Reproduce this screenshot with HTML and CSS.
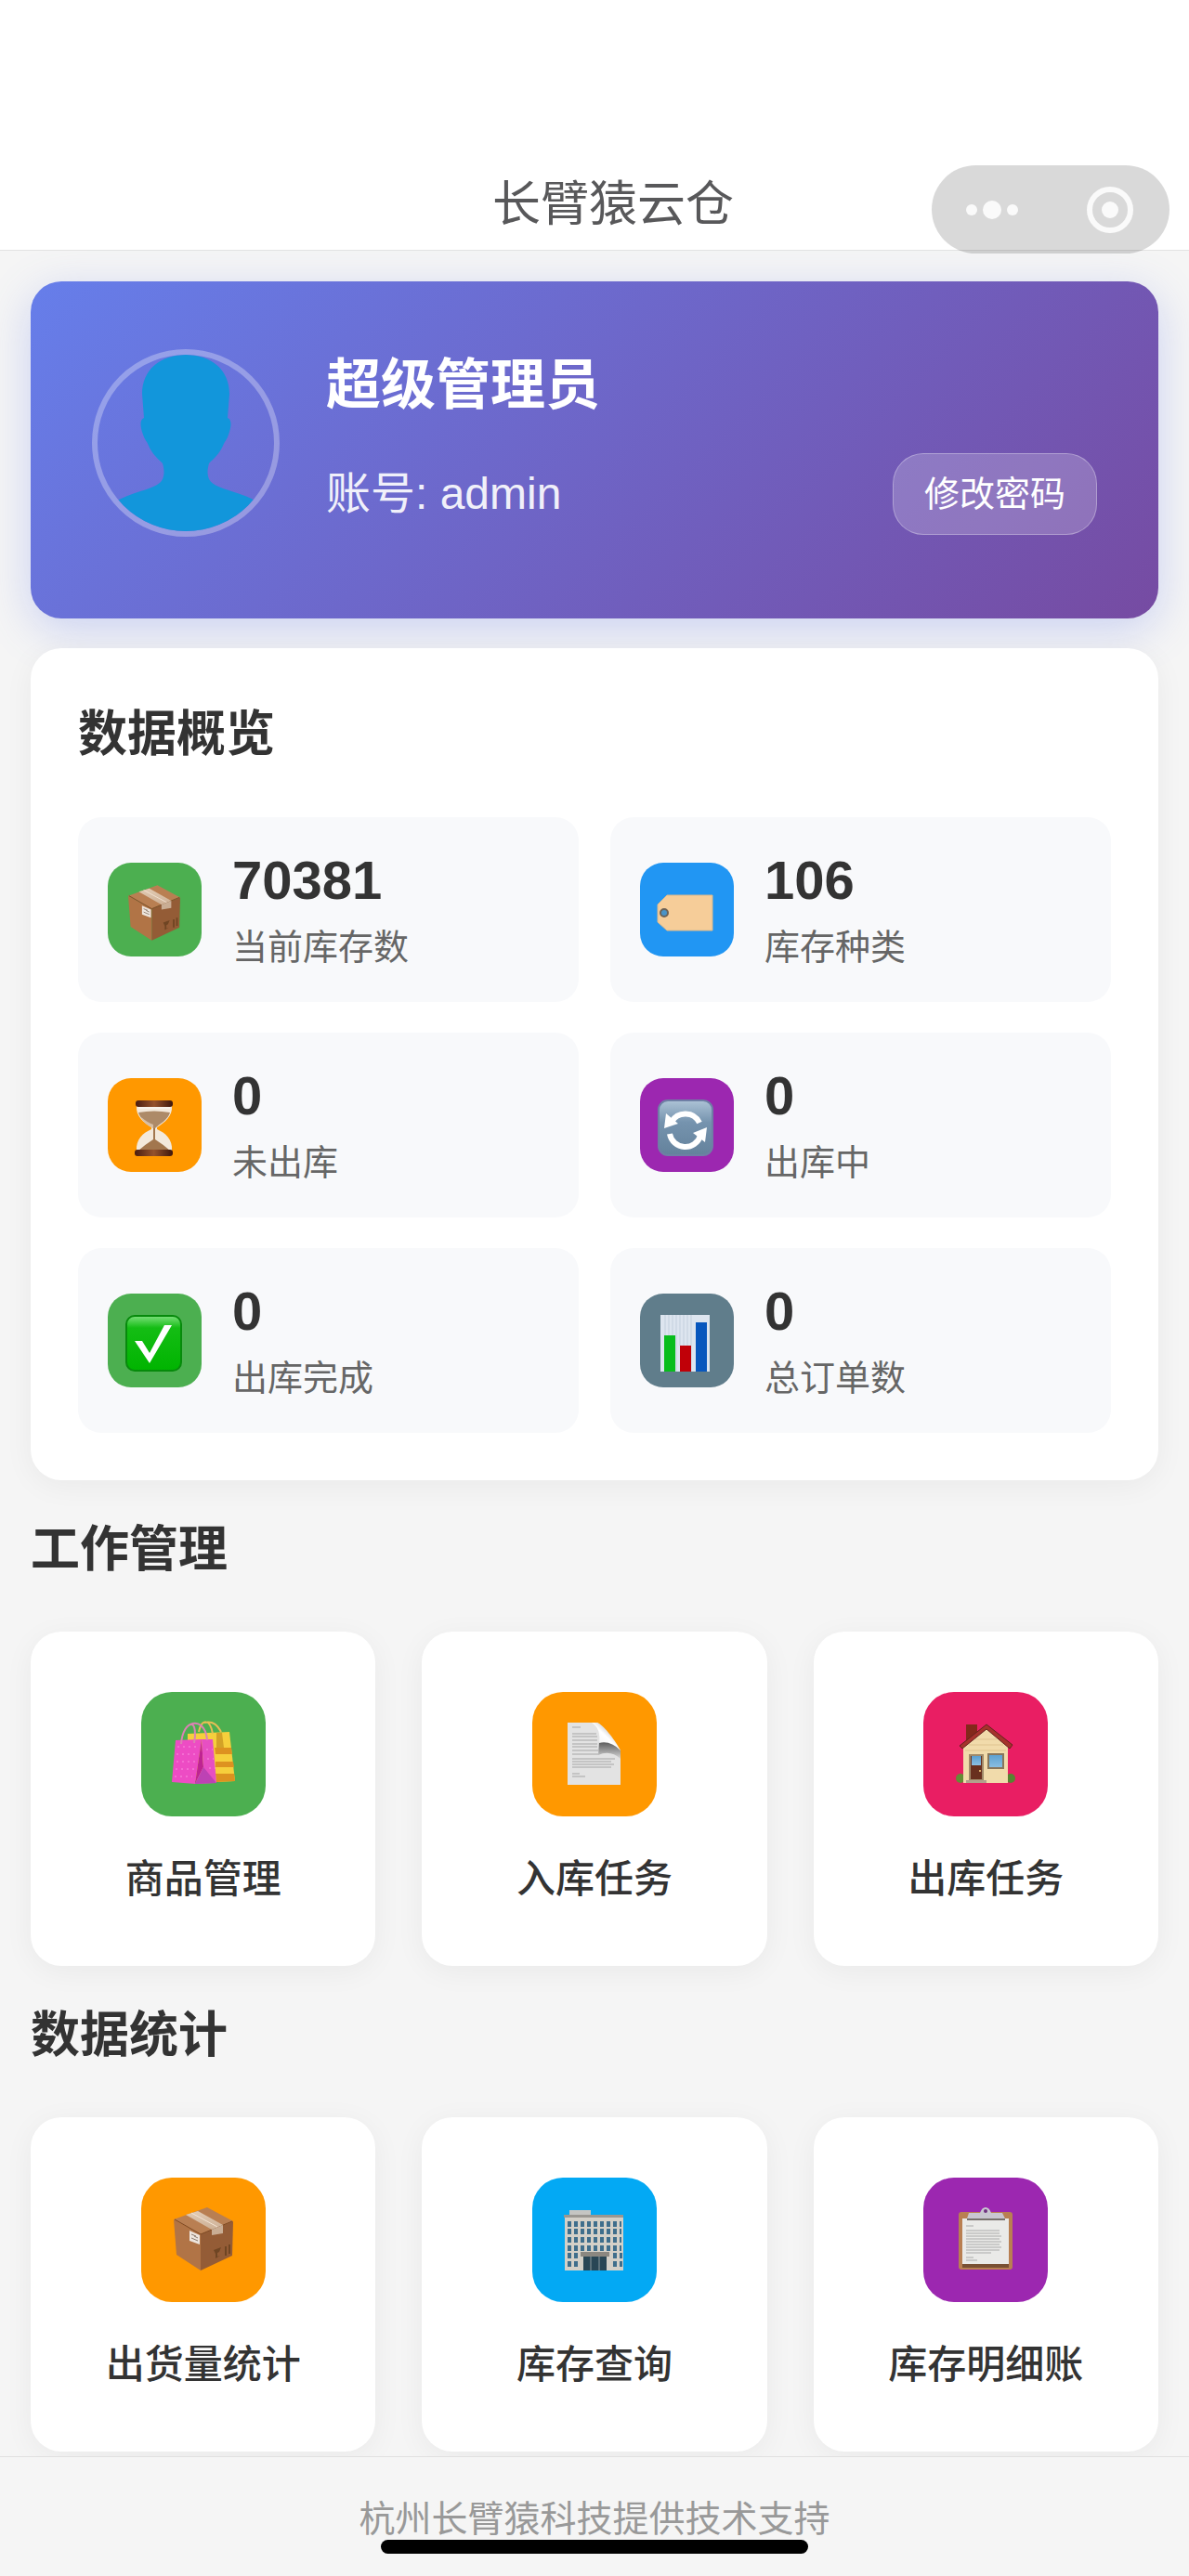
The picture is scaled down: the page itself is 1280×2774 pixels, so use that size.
FILE: index.html
```html
<!DOCTYPE html>
<html lang="zh-CN">
<head>
<meta charset="utf-8">
<meta name="viewport" content="width=device-width, initial-scale=1">
<title>长臂猿云仓</title>
<link rel="stylesheet" href="styles.css">
</head>
<body>
<svg class="defs" aria-hidden="true">
  <defs>
    <linearGradient id="tape" x1="0" y1="0" x2="0" y2="1"><stop offset="0" stop-color="#e2cbb4"/><stop offset="1" stop-color="#cdb095"/></linearGradient>
    <linearGradient id="gloss" x1="0" y1="0" x2="0" y2="1"><stop offset="0" stop-color="#7be07b"/><stop offset=".22" stop-color="#14bd14"/><stop offset="1" stop-color="#00b400"/></linearGradient>
    <linearGradient id="steel" x1="0" y1="0" x2="0" y2="1"><stop offset="0" stop-color="#adc3d6"/><stop offset=".4" stop-color="#7593ae"/><stop offset="1" stop-color="#64829c"/></linearGradient>
    <linearGradient id="wood" x1="0" y1="0" x2="1" y2="0"><stop offset="0" stop-color="#4a1d10"/><stop offset=".5" stop-color="#95522c"/><stop offset="1" stop-color="#3d160c"/></linearGradient>
    <linearGradient id="curl" x1="0" y1="1" x2="1" y2="0"><stop offset="0" stop-color="#e8e8e8"/><stop offset=".5" stop-color="#fff"/><stop offset="1" stop-color="#777"/></linearGradient>
    <linearGradient id="shade" x1="0" y1="0" x2="0" y2="1"><stop offset="0" stop-color="#555"/><stop offset="1" stop-color="#d8d8d8"/></linearGradient>
    <linearGradient id="pane" x1="0" y1="0" x2="0" y2="1"><stop offset="0" stop-color="#5b9fd0"/><stop offset="1" stop-color="#8cc0e2"/></linearGradient>
  </defs>
  <symbol id="parcel" viewBox="0 0 64 68">
    <path fill="#b97f52" d="M0 13 36 0l28 15-35 14z"/>
    <path fill="#b17446" d="m0 13 29 16v39L3 51z"/>
    <path fill="#945c36" d="m29 29 35-14-1 37-34 16z"/>
    <path fill="none" stroke="#7a4826" d="m1 13 28 16 34-14"/>
    <path fill="url(#tape)" d="m13 8 13-4 27 15-12 5z"/>
    <path fill="#c9ad94" d="m41 24 12-5v9l-12 2z"/>
    <path fill="none" stroke="#f3e4d4" d="m19 6 28 15"/>
    <path fill="#eee6de" d="m17 25 11 5v10l-11-4z"/>
    <path fill="none" stroke="#8b7a6c" d="m19 29 5 2m-5 2 7 3m-4-5 4 2"/>
    <path fill="#6f4523" d="m43 46 8-3-2 5-2 1v4l3-1-5 3v-5z"/>
    <path stroke="#6f4523" stroke-width="2" d="m56 42v10m4-12v10"/>
  </symbol>
</svg>

<header class="navbar">
  <h1 class="navbar-title">长臂猿云仓</h1>
  <div class="capsule">
    <button class="capsule-btn" type="button" aria-label="更多">
      <svg width="56" height="52" viewBox="0 0 56 52" fill="#fafafa"><circle cx="6" cy="26" r="6"/><circle cx="28" cy="26" r="10"/><circle cx="50" cy="26" r="6"/></svg>
    </button>
    <button class="capsule-btn" type="button" aria-label="关闭">
      <svg width="52" height="52" viewBox="0 0 52 52"><circle cx="26" cy="26" r="22" fill="none" stroke="#fafafa" stroke-width="6"/><circle cx="26" cy="26" r="9" fill="#fafafa"/></svg>
    </button>
  </div>
</header>

<main class="page">
  <section class="user-card">
    <div class="avatar">
      <svg viewBox="0 0 190 190"><path fill="#1296db" d="M95 0C68 0 48 16 48 42L50 68C45 70 46 78 49 86C51 92 53 93 55 98C59 107 65 112 70 117C72 124 72 129 70 134C65 145 40 146 20 158L40 190H150L171 158C151 146 125 145 120 134C118 129 118 124 120 117C125 112 131 107 135 98C137 93 139 92 141 86C144 78 145 70 140 68L142 42C142 16 122 0 95 0Z"/></svg>
    </div>
    <div class="user-info">
      <p class="user-name">超级管理员</p>
      <p class="user-account">账号: admin</p>
    </div>
    <button class="password-btn" type="button">修改密码</button>
  </section>

  <section class="overview">
    <h2 class="section-title">数据概览</h2>
    <div class="stats">
      <div class="stat">
        <span class="stat-icon green"><svg viewBox="0 0 101 101"><use href="#parcel" x="22" y="24" width="56" height="60"/></svg></span>
        <div><p class="stat-value">70381</p><p class="stat-label">当前库存数</p></div>
      </div>
      <div class="stat">
        <span class="stat-icon blue"><svg viewBox="0 0 101 101"><path fill="#f6cd99" stroke="#d9b98e" d="M29 35H78V73H29L19 64V45Z"/><circle cx="26" cy="54" r="4" fill="#4a94c8" stroke="#6c6257" stroke-width="2"/></svg></span>
        <div><p class="stat-value">106</p><p class="stat-label">库存种类</p></div>
      </div>
      <div class="stat">
        <span class="stat-icon orange"><svg viewBox="0 0 101 101">
          <path fill="#f3e9dc" d="M31 30H69C70 41 61 48 53 53V55C62 59 70 66 69 78H31C30 66 38 59 47 55V53C39 48 30 41 31 30Z"/>
          <path fill="#ad8a68" d="M33 37Q50 34 67 37C65 45 56 49 51 54H49C44 49 35 45 33 37Z"/>
          <path fill="#d6bea4" d="M36 42Q43 48 49 50L49 54Q38 49 36 42Z"/>
          <path fill="#a2764e" d="M49 54H51V66Q59 71 67 78H33Q41 71 49 66Z"/>
          <rect x="30" y="24" width="40" height="7" rx="3" fill="url(#wood)"/><rect x="29" y="77" width="41" height="7" rx="3" fill="url(#wood)"/>
          <path stroke="#f8f3ec" stroke-width="2" d="M33 32H67"/></svg></span>
        <div><p class="stat-value">0</p><p class="stat-label">未出库</p></div>
      </div>
      <div class="stat">
        <span class="stat-icon purple"><svg viewBox="0 0 101 101">
          <rect x="20" y="24" width="58" height="59" rx="10" fill="url(#steel)" stroke="#6f7fa5" stroke-width="2"/>
          <g fill="none" stroke="#fff" stroke-width="6"><path d="M64 48A17 17 0 0 0 34 47"/><path d="M32 60A17 17 0 0 0 65 62"/></g>
          <path fill="#fff" d="m28 38 13 11-15 5zM70 69 57 59l15-6z"/></svg></span>
        <div><p class="stat-value">0</p><p class="stat-label">出库中</p></div>
      </div>
      <div class="stat">
        <span class="stat-icon green"><svg viewBox="0 0 101 101">
          <rect x="20" y="24" width="59" height="59" rx="9" fill="url(#gloss)" stroke="#078a0c" stroke-width="2"/>
          <path fill="#fff" d="M29 51h8l8 13 16-30h8L45 75z"/></svg></span>
        <div><p class="stat-value">0</p><p class="stat-label">出库完成</p></div>
      </div>
      <div class="stat">
        <span class="stat-icon slate"><svg viewBox="0 0 101 101">
          <path fill="#dde5ef" d="M22 23h53v61H22z"/><path stroke="#c3cfdd" d="M27 23v22m4-22v22m4-22v22m4-22v61m4-61v33m4-33v33m4-33v33m4-33v61"/>
          <path fill="#08bd1c" d="M26 45h12v39H26z"/><path fill="#c00008" d="M43 56h12v28H43z"/><path fill="#0857bd" d="M60 31h12v53H60z"/></svg></span>
        <div><p class="stat-value">0</p><p class="stat-label">总订单数</p></div>
      </div>
    </div>
  </section>

  <section>
    <h2 class="section-title spaced">工作管理</h2>
    <nav class="menu">
      <a class="menu-item" href="#goods">
        <span class="menu-icon green"><svg viewBox="0 0 134 134">
          <path fill="#f6cf3c" d="M50 45 95 43l6 53-20 1-31-2z"/>
          <path fill="#dd9220" d="M79 60h18l1 7H80zM80 75h19l1 6H80zM80 88h20l1 8-20 1z"/><path fill="#d3a227" d="M81 44h6l2 16h-8z"/>
          <path fill="none" stroke="#e8bd55" stroke-width="2" d="M62 43C65 29 74 28 77 45M68 33C78 31 82 36 86 43"/>
          <path fill="#ed4cc4" d="m37 52 28-1-7 48-25-2z"/><path fill="#bf2392" d="m65 51-7 48 9-18z"/><path fill="#e74fc3" d="m65 51 12 0 4 47-23 1 9-18z"/><path fill="#bd42b4" d="m67 81 14 17-23 1z"/>
          <path stroke="#f98fdf" stroke-width="1" stroke-dasharray="2 4" d="M39 59h22M38 67h22M38 75h20M37 83h20M36 91h19M70 62h7M71 72h7M73 82h7"/>
          <path fill="none" stroke="#dc82b4" stroke-width="2" d="M43 56C44 42 50 35 54 35S59 45 57 55M53 35C61 31 70 37 71 52"/></svg></span>
        <span class="menu-label">商品管理</span>
      </a>
      <a class="menu-item" href="#inbound">
        <span class="menu-icon orange"><svg viewBox="0 0 134 134">
          <path fill="#e3e3e3" d="M38 33H70L95 63V100H38Z"/>
          <path stroke="#a5a5a5" d="M43 38h9M43 45h26M43 48h27M43 52h27M43 56h27M43 59h27M43 63h28M43 67h28M43 72h46M43 75h42M43 78h45M43 81h42M43 88h8M43 91h14"/>
          <path fill="url(#shade)" d="M72 54Q86 50 95 63V72Q84 62 71 68Z"/>
          <path fill="url(#curl)" d="M64 33H70C76 35 88 50 95 63Q84 52 72 55Q74 39 64 33Z"/></svg></span>
        <span class="menu-label">入库任务</span>
      </a>
      <a class="menu-item" href="#outbound">
        <span class="menu-icon pink"><svg viewBox="0 0 134 134">
          <path fill="#83281b" d="M46 35h12v20H46z"/><path fill="#f1dbab" d="M43 58 68 38l23 20v40H43z"/>
          <path stroke="#dfc38f" d="M56 51h23M49 57h37M45 63h44"/>
          <circle cx="40" cy="93" r="5" fill="#658c35"/><circle cx="94" cy="93" r="5" fill="#568431"/>
          <path fill="#f1dbab" d="M43 80h48v18H43z"/>
          <path fill="#a5332c" stroke="#64201d" stroke-linejoin="round" d="m68 35 28 22-3 4-25-21-26 21-3-3z"/>
          <path fill="#69301f" stroke="#a08a6a" stroke-width="2" d="M50 68h14v27H50z"/><path fill="url(#pane)" d="M52 69h10v10H52z"/><circle cx="61" cy="85" r="1" fill="#ffd884"/>
          <path fill="url(#pane)" stroke="#89765b" stroke-width="2" d="M70 67h16v15H70z"/><path fill="#b1a18c" d="M46 95h22v3H46z"/></svg></span>
        <span class="menu-label">出库任务</span>
      </a>
    </nav>
  </section>

  <section>
    <h2 class="section-title spaced">数据统计</h2>
    <nav class="menu">
      <a class="menu-item" href="#shipments">
        <span class="menu-icon orange"><svg viewBox="0 0 134 134"><use href="#parcel" x="35" y="32" width="64" height="68"/></svg></span>
        <span class="menu-label">出货量统计</span>
      </a>
      <a class="menu-item" href="#stock">
        <span class="menu-icon sky"><svg viewBox="0 0 134 134">
          <path fill="#c5c5c2" d="M40 35h23v6H40z"/><path fill="#d4d0c8" d="M35 41h63v59H35z"/><path fill="#9a9791" d="M34 40h64v3H34z"/>
          <g stroke="#3f6e8c" stroke-width="6" stroke-dasharray="4 3"><path d="M38 50h58M38 58h58M38 67h58M38 76h58"/><path d="M38 84h12M38 93h12M87 84h10M87 93h10"/></g>
          <path fill="#8b8780" d="M52 80h31v5H52z"/><path fill="#294655" d="M55 85h25v15H55z"/><path stroke="#8e9aa0" d="M63 85v15m9-15v15"/></svg></span>
        <span class="menu-label">库存查询</span>
      </a>
      <a class="menu-item" href="#ledger">
        <span class="menu-icon purple"><svg viewBox="0 0 134 134">
          <rect x="38" y="37" width="58" height="62" rx="3" fill="#b97f52"/><path fill="#795033" d="M42 92h50v5H42z"/><path fill="#eaeae8" d="M42 44h50v49H42z"/>
          <path stroke="#aaa" d="M46 52h8M46 57h36M46 60h36M46 63h38M46 66h36M46 69h38M46 72h36M46 75h38M46 78h36M46 81h27M46 86h8M46 89h12"/>
          <path fill="#c9c6d0" d="M49 38h12q2-6 6-6t6 6h12l3 6H47z"/><circle cx="67" cy="36" r="2" fill="#6f3280"/><path stroke="#77706c" stroke-width="2" d="M47 45h41"/></svg></span>
        <span class="menu-label">库存明细账</span>
      </a>
    </nav>
  </section>
</main>

<footer class="footer">
  <p>杭州长臂猿科技提供技术支持</p>
  <span class="home-indicator"></span>
</footer>
</body>
</html>
```
FILE: styles.css
```css
* {
  box-sizing: border-box;
}

body {
  margin: 0;
  background: #f5f5f5;
  color: #333;
  font-family: "Liberation Sans", "Noto Sans CJK SC", sans-serif;
}

h1, h2, p {
  margin: 0;
}

button {
  font-family: inherit;
  cursor: pointer;
}

svg {
  display: block;
}

.defs {
  position: absolute;
  width: 0;
  height: 0;
}

/* Top bar */
.navbar {
  position: relative;
  padding: 180px 0 9px 40px;
  background: #fff;
  border-bottom: 1px solid #e2e2e2;
}

.navbar-title {
  font-size: 52px;
  font-weight: 400;
  line-height: 80px;
  text-align: center;
  color: #58585a;
}

.capsule {
  position: absolute;
  top: 178px;
  right: 21px;
  display: flex;
  align-items: center;
  justify-content: space-between;
  width: 256px;
  height: 95px;
  padding: 0 38px 0 37px;
  border-radius: 48px;
  background: rgba(0, 0, 0, 0.15);
}

.capsule-btn {
  padding: 0;
  border: 0;
  background: none;
}

/* Content */
.page {
  padding: 33px 33px 5px;
}

.user-card {
  display: flex;
  align-items: flex-start;
  gap: 50px;
  padding: 73px 66px 88px;
  border-radius: 33px;
  background: linear-gradient(135deg, #667eea 0%, #764ba2 100%);
  box-shadow: 0 12px 48px rgba(102, 126, 234, 0.3);
  color: #fff;
}

.avatar {
  flex: none;
  width: 202px;
  height: 202px;
  border: 6px solid rgba(255, 255, 255, 0.3);
  border-radius: 50%;
  overflow: hidden;
}

.user-info {
  flex: 1;
}

.user-name {
  margin-bottom: 46px;
  font-size: 59px;
  font-weight: 700;
  line-height: 78px;
}

.user-account {
  font-size: 48px;
  line-height: 64px;
  opacity: 0.9;
}

.password-btn {
  align-self: flex-end;
  margin-bottom: 2px;
  padding: 16px 33px;
  border: 1px solid rgba(255, 255, 255, 0.3);
  border-radius: 33px;
  background: rgba(255, 255, 255, 0.2);
  color: #fff;
  font-size: 38px;
  line-height: 54px;
}

.overview {
  margin-top: 32px;
  padding: 51px;
  border-radius: 33px;
  background: #fff;
  box-shadow: 0 6px 32px rgba(0, 0, 0, 0.05);
}

.section-title {
  margin-bottom: 47px;
  font-size: 53px;
  font-weight: 700;
  line-height: 84px;
}

.section-title.spaced {
  margin: 33px 0 46px;
}

.stats {
  display: grid;
  grid-template-columns: repeat(2, 1fr);
  gap: 33px 34px;
}

.stat {
  display: flex;
  align-items: center;
  gap: 33px;
  padding: 34px 32px;
  border-radius: 25px;
  background: #f8f9fb;
}

.stat-icon {
  flex: none;
  width: 101px;
  height: 101px;
  border-radius: 25px;
}

.stat-value {
  margin-bottom: 13px;
  font-size: 58px;
  font-weight: 700;
  line-height: 68px;
}

.stat-label {
  font-size: 38px;
  line-height: 50px;
  color: #666;
}

.menu {
  display: grid;
  grid-template-columns: repeat(3, 1fr);
  gap: 50px;
}

.menu-item {
  display: flex;
  flex-direction: column;
  align-items: center;
  gap: 38px;
  padding: 65px 16px 63px;
  border-radius: 33px;
  background: #fff;
  box-shadow: 0 6px 32px rgba(0, 0, 0, 0.05);
  color: inherit;
  text-decoration: none;
}

.menu-icon {
  width: 134px;
  height: 134px;
  border-radius: 33px;
}

.menu-label {
  font-size: 42px;
  font-weight: 500;
  line-height: 60px;
}

.green { background: #4caf50; }
.blue { background: #2196f3; }
.orange { background: #ff9800; }
.purple { background: #9c27b0; }
.slate { background: #607d8b; }
.pink { background: #e91e63; }
.sky { background: #03a9f4; }

/* Bottom bar */
.footer {
  position: relative;
  padding: 37px 0 31px;
  border-top: 1px solid #e0e0e0;
  background: #f5f5f5;
  color: #999;
  font-size: 39px;
  line-height: 60px;
  text-align: center;
}

.home-indicator {
  position: absolute;
  bottom: 24px;
  left: 32%;
  width: 36%;
  height: 15px;
  border-radius: 8px;
  background: #000;
}
```
